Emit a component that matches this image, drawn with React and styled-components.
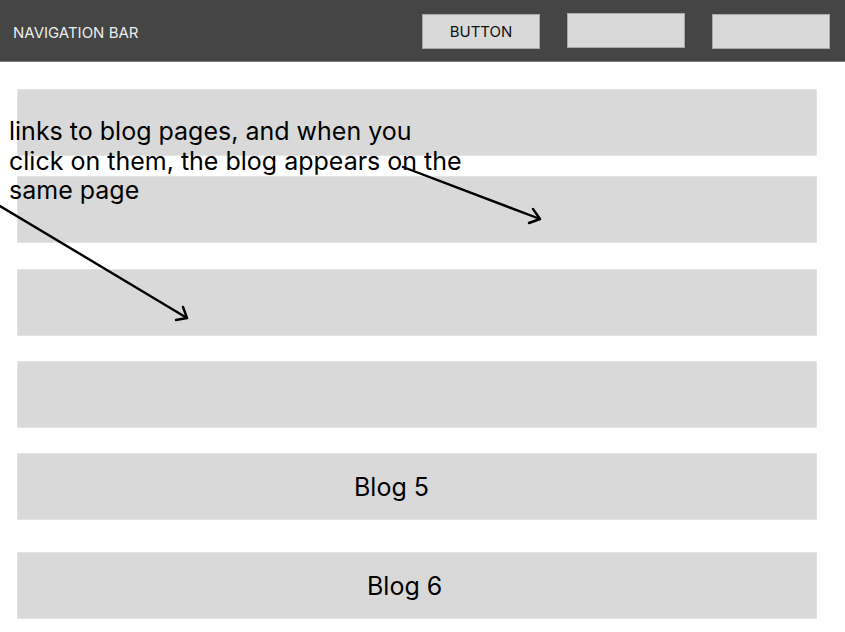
import React from "react";
import styled, { createGlobalStyle } from "styled-components";

const Global = createGlobalStyle`
  html, body { margin: 0; padding: 0; background: #ffffff; }
  body { font-family: Inter, "Noto Sans", "Liberation Sans", sans-serif; }
`;

const Page = styled.div`
  position: relative;
  width: 845px;
  height: 632px;
  overflow: hidden;
  background: #ffffff;
`;

const NavBar = styled.header`
  height: 62px;
  box-sizing: border-box;
  background: #454545;
  border-bottom: 1px solid #7c7c7c;
  display: flex;
  align-items: center;
  padding: 3px 15px 0 13px;
`;

const NavTitle = styled.span`
  color: #ececec;
  font-size: 15px;
`;

const NavButtons = styled.nav`
  margin-left: auto;
  display: flex;
  align-items: center;
  gap: 27px;
  transform: translateY(-1px);
`;

const NavButton = styled.div`
  width: 118px;
  height: 35px;
  box-sizing: border-box;
  background: #d9d9d9;
  border: 1px solid #a9a9a9;
  display: flex;
  align-items: center;
  justify-content: center;
  font-size: 15px;
  color: #111;
  transform: translateY(${(p) => p.$shift || 0}px);
`;

const BlogList = styled.main`
  display: flex;
  flex-direction: column;
  margin-left: 17px;
  width: 800px;
`;

const BlogRow = styled.div`
  height: 67px;
  box-sizing: border-box;
  margin-top: ${(p) => p.$gap}px;
  background: #d9d9d9;
  border: 1px solid #e3e3e3;
  display: flex;
  align-items: center;
  padding-left: ${(p) => p.$indent || 0}px;
  font-size: 25px;
  color: #000;
`;

const Note = styled.p`
  position: absolute;
  left: 9px;
  top: 117px;
  margin: 0;
  font-size: 25px;
  line-height: 29.5px;
  color: #000;
  white-space: pre;
`;

const Arrows = styled.svg`
  position: absolute;
  left: 0;
  top: 0;
  pointer-events: none;
`;

const rows = [
  { gap: 27 },
  { gap: 20 },
  { gap: 26 },
  { gap: 25 },
  { gap: 25, label: "Blog 5", indent: 336 },
  { gap: 32, label: "Blog 6", indent: 349 },
];

export default function App() {
  return (
    <Page>
      <Global />
      <NavBar>
        <NavTitle>NAVIGATION BAR</NavTitle>
        <NavButtons>
          <NavButton>BUTTON</NavButton>
          <NavButton $shift={-1} />
          <NavButton />
        </NavButtons>
      </NavBar>
      <BlogList>
        {rows.map((r, i) => (
          <BlogRow key={i} $gap={r.gap} $indent={r.indent}>
            {r.label}
          </BlogRow>
        ))}
      </BlogList>
      <Note>{"links to blog pages, and when you\nclick on them, the blog appears on the\nsame page"}</Note>
      <Arrows width="845" height="632" viewBox="0 0 845 632">
        <g stroke="#000" strokeWidth="2.4" fill="none" strokeLinecap="round" strokeLinejoin="round">
          <path d="M403 167 L540 219" />
          <path d="M533 209 L540 219 L529 223" />
          <path d="M0 206 L187 318" />
          <path d="M183 307 L187 318 L176 320" />
        </g>
      </Arrows>
    </Page>
  );
}
